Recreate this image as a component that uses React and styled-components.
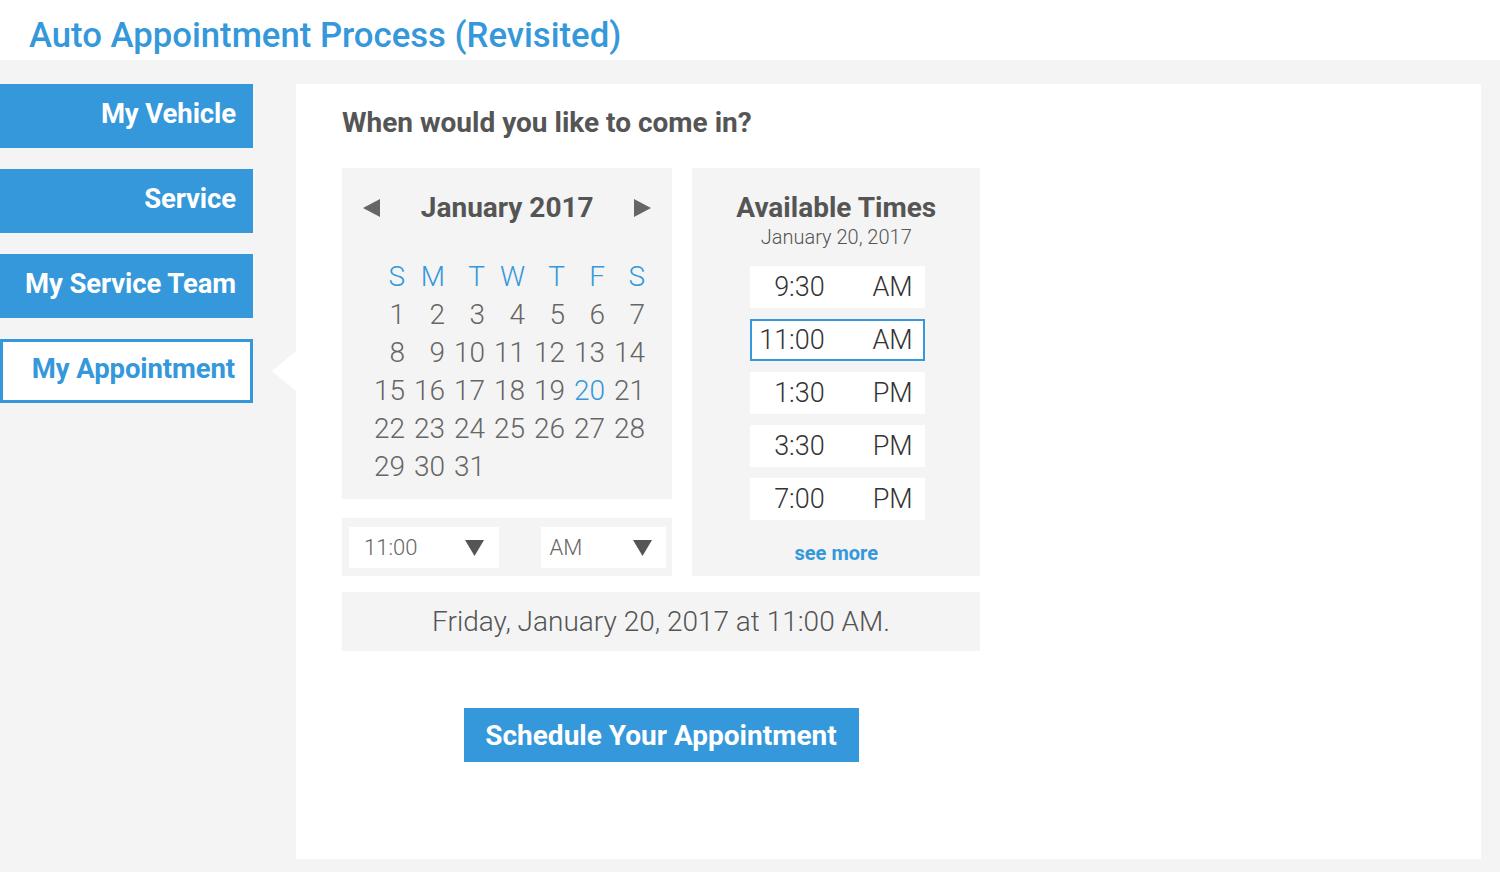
import React from "react";
import styled, { createGlobalStyle } from "styled-components";

const Global = createGlobalStyle`
  body {
    margin: 0;
    background: #fff;
    font-family: Roboto, "Liberation Sans", sans-serif;
  }
`;

const Page = styled.div`
  width: 1500px;
  height: 875px;
`;

const Header = styled.header`
  height: 60px;
  box-sizing: border-box;
  padding: 15px 0 0 29px;
`;

const Title = styled.h1`
  margin: 0;
  font-size: 34.7px;
  line-height: 40px;
  font-weight: 500;
  color: #3498db;
`;

const Main = styled.main`
  display: flex;
  height: 812px;
  box-sizing: border-box;
  padding: 24px 19px 13px 0;
  background: #f4f4f4;
`;

const Sidebar = styled.nav`
  width: 253px;
  flex-shrink: 0;
  display: flex;
  flex-direction: column;
  gap: 21px;
`;

const Tab = styled.div`
  position: relative;
  height: 64px;
  box-sizing: border-box;
  padding: 0 17px 5px 0;
  display: flex;
  align-items: center;
  justify-content: flex-end;
  font-size: 27.5px;
  font-weight: 700;
  letter-spacing: -0.1px;
  color: ${(p) => (p.$active ? "#3498db" : "#fff")};
  background: ${(p) => (p.$active ? "#fff" : "#3498db")};
  border: ${(p) => (p.$active ? "3px solid #3498db" : "none")};
  padding-right: ${(p) => (p.$active ? "15px" : "17px")};

  &::after {
    content: "";
    display: ${(p) => (p.$active ? "block" : "none")};
    position: absolute;
    right: -46px;
    top: 50%;
    transform: translateY(-50%);
    border-top: 20px solid transparent;
    border-bottom: 20px solid transparent;
    border-right: 24px solid #fff;
  }
`;

const Panel = styled.section`
  flex: 1;
  margin-left: 43px;
  background: #fff;
  padding: 23px 0 0 46px;
`;

const Question = styled.h2`
  margin: 0 0 29px;
  font-size: 28px;
  line-height: 32px;
  font-weight: 700;
  color: #555;
`;

const Content = styled.div`
  width: 638px;
  display: flex;
  flex-direction: column;
`;

const Columns = styled.div`
  display: flex;
  gap: 20px;
`;

const LeftCol = styled.div`
  width: 331px;
  display: flex;
  flex-direction: column;
  gap: 19px;
`;

const Calendar = styled.div`
  height: 331px;
  box-sizing: border-box;
  background: #f4f4f4;
  padding-top: 22px;
`;

const CalHeader = styled.div`
  height: 36px;
  padding: 0 21px;
  display: flex;
  align-items: center;
  justify-content: space-between;
`;

const Month = styled.div`
  font-size: 28px;
  line-height: 36px;
  font-weight: 700;
  color: #555;
`;

const Days = styled.div`
  margin: 32px 0 0 23px;
  display: grid;
  grid-template-columns: repeat(7, 40px);
  grid-auto-rows: 38px;
`;

const Cell = styled.div`
  text-align: right;
  font-size: 28px;
  line-height: 38px;
  font-weight: 300;
  color: ${(p) => (p.$blue ? "#3498db" : "#666")};
`;

const Pickers = styled.div`
  height: 58px;
  box-sizing: border-box;
  background: #f4f4f4;
  padding: 9px 6px 8px 7px;
  display: flex;
  justify-content: space-between;
`;

const Select = styled.div`
  width: ${(p) => p.$w}px;
  box-sizing: border-box;
  background: #fff;
  display: flex;
  align-items: center;
  justify-content: space-between;
  padding: 0 ${(p) => p.$pr}px 0 ${(p) => p.$pl}px;
  font-size: 22px;
  font-weight: 300;
  color: #666;
`;

const Times = styled.div`
  width: 288px;
  height: 408px;
  box-sizing: border-box;
  background: #f4f4f4;
  padding-top: 23px;
  display: flex;
  flex-direction: column;
  align-items: center;
`;

const TimesTitle = styled.div`
  font-size: 28px;
  line-height: 34px;
  font-weight: 700;
  color: #555;
`;

const TimesDate = styled.div`
  font-size: 20px;
  line-height: 24px;
  font-weight: 300;
  color: #555;
  margin-bottom: 17px;
`;

const Slots = styled.div`
  display: flex;
  flex-direction: column;
  gap: 11px;
  margin-left: 2px;
`;

const Slot = styled.div`
  width: 175px;
  height: 42px;
  box-sizing: border-box;
  background: #fff;
  border: 2px solid ${(p) => (p.$selected ? "#3498db" : "#fff")};
  display: flex;
  align-items: center;
  padding-right: 10px;
  font-size: 27px;
  font-weight: 300;
  color: #333;
`;

const SlotTime = styled.span`
  width: 73px;
  text-align: right;
`;

const SlotMeridiem = styled.span`
  margin-left: auto;
`;

const SeeMore = styled.a`
  margin-top: 21px;
  font-size: 20px;
  line-height: 24px;
  font-weight: 700;
  color: #3498db;
  text-decoration: none;
`;

const Summary = styled.div`
  margin-top: 16px;
  height: 59px;
  background: #f4f4f4;
  text-align: center;
  font-size: 28px;
  line-height: 59px;
  font-weight: 300;
  color: #555;
`;

const ScheduleButton = styled.button`
  align-self: center;
  margin-top: 57px;
  width: 395px;
  height: 54px;
  border: none;
  background: #3498db;
  color: #fff;
  font-family: inherit;
  font-size: 28px;
  font-weight: 700;
  cursor: pointer;
`;

const Arrow = ({ dir }) => (
  <svg width="17" height="18" viewBox="0 0 17 18">
    <polygon
      points={dir === "left" ? "17,0 17,18 0,9" : "0,0 0,18 17,9"}
      fill="#666"
    />
  </svg>
);

const Caret = () => (
  <svg width="19" height="16" viewBox="0 0 19 16">
    <polygon points="0,0 19,0 9.5,16" fill="#555" />
  </svg>
);

const tabs = ["My Vehicle", "Service", "My Service Team", "My Appointment"];
const weekdays = ["S", "M", "T", "W", "T", "F", "S"];
const dates = Array.from({ length: 31 }, (_, i) => i + 1);
const slots = [
  ["9:30", "AM"],
  ["11:00", "AM"],
  ["1:30", "PM"],
  ["3:30", "PM"],
  ["7:00", "PM"],
];

export default function App() {
  return (
    <Page>
      <Global />
      <Header>
        <Title>Auto Appointment Process (Revisited)</Title>
      </Header>
      <Main>
        <Sidebar>
          {tabs.map((t, i) => (
            <Tab key={t} $active={i === 3}>
              {t}
            </Tab>
          ))}
        </Sidebar>
        <Panel>
          <Question>When would you like to come in?</Question>
          <Content>
            <Columns>
              <LeftCol>
                <Calendar>
                  <CalHeader>
                    <Arrow dir="left" />
                    <Month>January 2017</Month>
                    <Arrow dir="right" />
                  </CalHeader>
                  <Days>
                    {weekdays.map((d, i) => (
                      <Cell key={"w" + i} $blue>
                        {d}
                      </Cell>
                    ))}
                    {dates.map((d) => (
                      <Cell key={d} $blue={d === 20}>
                        {d}
                      </Cell>
                    ))}
                  </Days>
                </Calendar>
                <Pickers>
                  <Select $w={150} $pl={15} $pr={15}>
                    11:00
                    <Caret />
                  </Select>
                  <Select $w={125} $pl={8} $pr={14}>
                    AM
                    <Caret />
                  </Select>
                </Pickers>
              </LeftCol>
              <Times>
                <TimesTitle>Available Times</TimesTitle>
                <TimesDate>January 20, 2017</TimesDate>
                <Slots>
                  {slots.map(([t, m]) => (
                    <Slot key={t} $selected={t === "11:00"}>
                      <SlotTime>{t}</SlotTime>
                      <SlotMeridiem>{m}</SlotMeridiem>
                    </Slot>
                  ))}
                </Slots>
                <SeeMore href="#">see more</SeeMore>
              </Times>
            </Columns>
            <Summary>Friday, January 20, 2017 at 11:00 AM.</Summary>
            <ScheduleButton>Schedule Your Appointment</ScheduleButton>
          </Content>
        </Panel>
      </Main>
    </Page>
  );
}
